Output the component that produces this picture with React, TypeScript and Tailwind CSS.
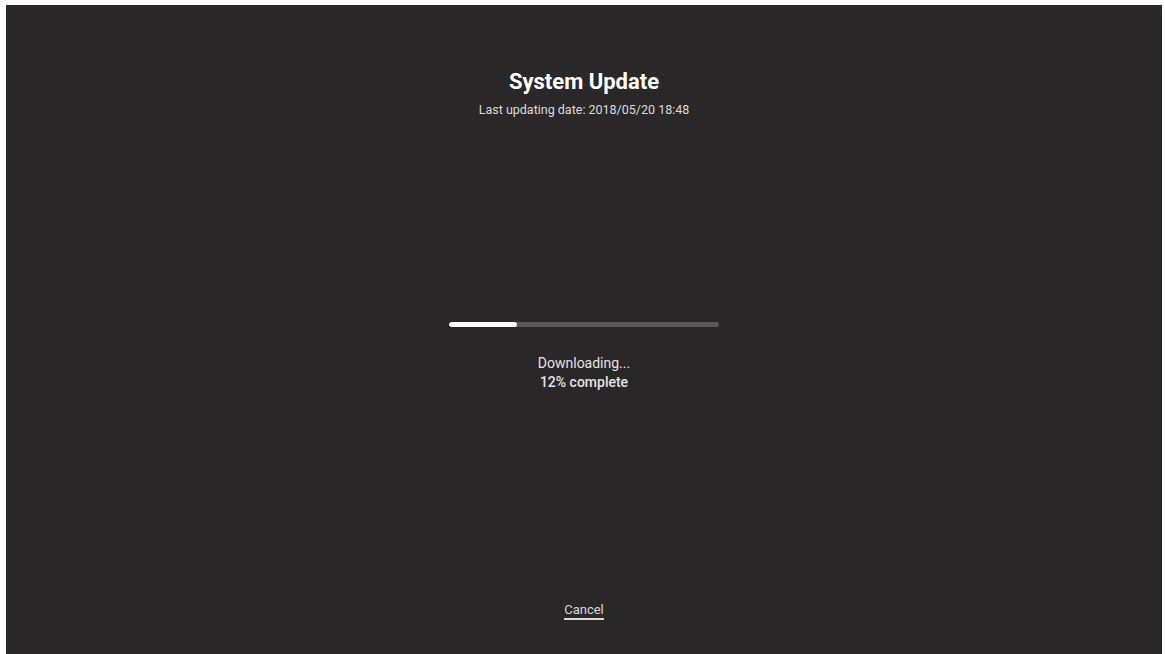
export default function App() {
  const progress = 25

  return (
    <div className="h-[654px] w-[1165px] overflow-hidden bg-white pl-[6px] pr-[3px] pt-[5px]">
      <div
        className="flex h-[649px] flex-col items-center bg-[#2a2728] text-white"
        style={{ fontFamily: 'Roboto, "Liberation Sans", sans-serif' }}
      >
        <h1 className="mt-[64px] text-[22px] font-bold leading-[26px]">System Update</h1>
        <p className="mt-[7px] text-[12.5px] leading-[15px] text-[#dcdcdc]">
          Last updating date: 2018/05/20 18:48
        </p>

        <div className="mt-[205px] h-[5px] w-[270px] overflow-hidden rounded-full bg-[#585657]">
          <div className="h-full rounded-full bg-white" style={{ width: `${progress}%` }} />
        </div>

        <div className="mt-[27px] flex flex-col items-center text-[14px] leading-[19px] text-[#e4e4e4]">
          <span>Downloading...</span>
          <span className="font-medium">12% complete</span>
        </div>

        <button
          type="button"
          className="mt-auto mb-[34px] border-b-2 border-[#d8d8d8] text-[13px] leading-[16px] text-[#d8d8d8]"
        >
          Cancel
        </button>
      </div>
    </div>
  )
}
